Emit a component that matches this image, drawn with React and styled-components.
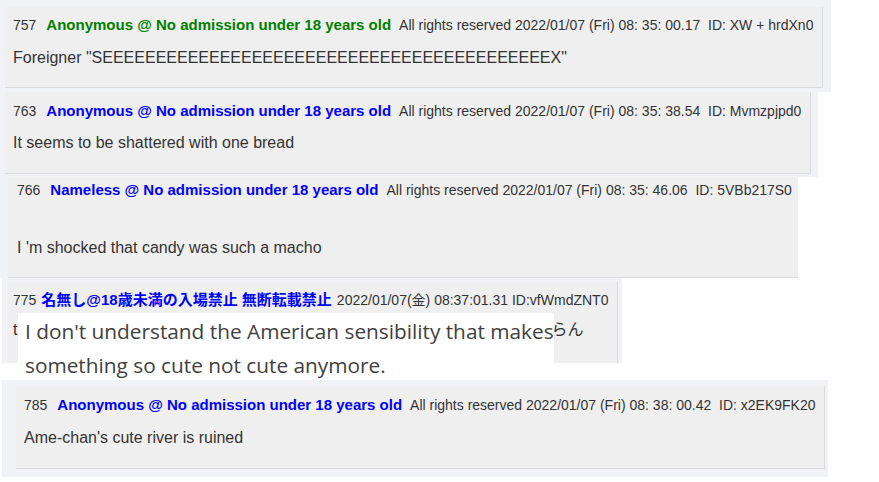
import React from "react";
import styled, { createGlobalStyle } from "styled-components";

const Global = createGlobalStyle`
  html, body { margin: 0; padding: 0; background: #ffffff; }
  body { font-family: "Liberation Sans", Arial, sans-serif; }
`;

const Page = styled.div`
  display: flex;
  flex-direction: column;
  align-items: flex-start;
  width: 879px;
  height: 482px;
  overflow: hidden;
`;

const Strip = styled.div`
  position: relative;
  box-sizing: border-box;
  width: ${(p) => p.$w}px;
  height: ${(p) => p.$h}px;
  margin-left: ${(p) => p.$ml || 0}px;
  margin-top: ${(p) => p.$mt || 0}px;
  padding: ${(p) => p.$pad};
  background: #f1f2f6;
  display: flex;
  align-items: flex-start;
`;

const Card = styled.div`
  box-sizing: border-box;
  width: ${(p) => p.$w}px;
  height: ${(p) => p.$h}px;
  padding: ${(p) => p.$pad};
  background: #efefef;
  border-right: ${(p) => (p.$noRight ? "none" : "1px solid #dadada")};
  border-bottom: ${(p) => (p.$noBottom ? "none" : "1px solid #dadada")};
  color: #333333;
`;

const Header = styled.div`
  display: flex;
  align-items: baseline;
  white-space: pre;
  font-size: 14px;
  line-height: 18px;
  gap: ${(p) => (p.$compact ? 5 : 8)}px;
  margin-bottom: ${(p) => p.$mb}px;
`;

const Num = styled.span`
  font-size: 14px;
  margin-right: ${(p) => (p.$compact ? 0 : 2)}px;
`;

const Name = styled.span`
  font-weight: bold;
  font-size: 15px;
  color: ${(p) => p.$color};
  font-family: "Liberation Sans", "Noto Sans CJK JP", sans-serif;
`;

const Meta = styled.span`
  font-size: 14px;
  font-family: "Liberation Sans", "Noto Sans CJK JP", sans-serif;
`;

const Body = styled.div`
  font-size: 16px;
  line-height: 24px;
  white-space: nowrap;
  font-family: "Liberation Sans", "Noto Sans CJK JP", sans-serif;
`;

const Hidden = styled.span`
  display: inline-block;
  width: ${(p) => p.$w}px;
`;

const Overlay = styled.div`
  position: absolute;
  left: 16px;
  top: 35px;
  width: 536px;
  height: 65px;
  box-sizing: border-box;
  padding: 1px 0 0 7px;
  background: #ffffff;
  color: #404040;
  font-family: "Open Sans", "Noto Sans", sans-serif;
  font-size: 20.8px;
  line-height: 34px;
  white-space: nowrap;
`;

const Line = styled.div``;

const E = "E".repeat(42);

function Post({ num, name, color, meta, body, compact, mb }) {
  return (
    <>
      <Header $compact={compact} $mb={mb}>
        <Num $compact={compact}>{num}</Num>
        <Name $color={color}>{name}</Name>
        <Meta>{meta}</Meta>
      </Header>
      <Body>{body}</Body>
    </>
  );
}

export default function App() {
  return (
    <>
      <Global />
      <Page>
        <Strip $w={831} $h={92} $pad="7px 0 0 5px">
          <Card $w={818} $h={81} $pad="9px 0 0 8px">
            <Post
              num="757"
              name="Anonymous @ No admission under 18 years old"
              color="#008000"
              meta="All rights reserved 2022/01/07 (Fri) 08: 35: 00.17  ID: XW + hrdXn0"
              body={`Foreigner "S${E}X"`}
              mb={12}
            />
          </Card>
        </Strip>

        <Strip $w={818} $h={85} $pad="0 0 0 5px">
          <Card $w={806} $h={82} $pad="10px 0 0 8px">
            <Post
              num="763"
              name="Anonymous @ No admission under 18 years old"
              color="#0000ff"
              meta="All rights reserved 2022/01/07 (Fri) 08: 35: 38.54  ID: Mvmzpjpd0"
              body="It seems to be shattered with one bread"
              mb={11}
            />
          </Card>
        </Strip>

        <Strip $w={798} $h={101} $pad="0 0 0 8px">
          <Card $w={790} $h={101} $pad="4px 0 0 9px" $noRight>
            <Post
              num="766"
              name="Nameless @ No admission under 18 years old"
              color="#0000ff"
              meta="All rights reserved 2022/01/07 (Fri) 08: 35: 46.06  ID: 5VBb217S0"
              body="I 'm shocked that candy was such a macho"
              mb={37}
            />
          </Card>
        </Strip>

        <Strip $w={620} $h={85} $ml={2} $pad="4px 0 0 6px">
          <Card $w={610} $h={81} $pad="9px 0 0 5px" $noBottom>
            <Post
              compact
              num="775"
              name="名無し@18歳未満の入場禁止 無断転載禁止"
              color="#0000ff"
              meta="2022/01/07(金) 08:37:01.31 ID:vfWmdZNT0"
              body={
                <>
                  t<Hidden $w={534} />らん
                </>
              }
              mb={9}
            />
          </Card>
          <Overlay>
            <Line>I don't understand the American sensibility that makes</Line>
            <Line>something so cute not cute anymore.</Line>
          </Overlay>
        </Strip>

        <Strip $w={826} $h={97} $ml={2} $mt={17} $pad="6px 0 0 14px">
          <Card $w={809} $h={83} $pad="10px 0 0 8px">
            <Post
              num="785"
              name="Anonymous @ No admission under 18 years old"
              color="#0000ff"
              meta="All rights reserved 2022/01/07 (Fri) 08: 38: 00.42  ID: x2EK9FK20"
              body="Ame-chan's cute river is ruined"
              mb={12}
            />
          </Card>
        </Strip>
      </Page>
    </>
  );
}
